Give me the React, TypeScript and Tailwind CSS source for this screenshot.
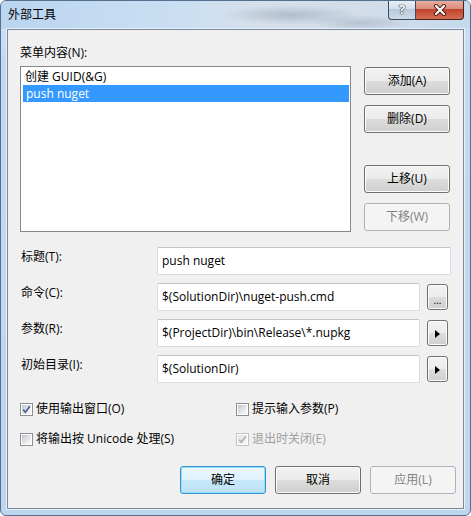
import React from "react"

const btnBase = "w-[86px] h-[28px] rounded-[3px] border text-[12px] flex items-center justify-center shrink-0"
const btnNormal = "border-[#707070] text-black bg-[linear-gradient(to_bottom,#f2f2f2_0%,#ebebeb_50%,#dddddd_50%,#cfcfcf_100%)] shadow-[inset_0_0_0_1px_#fcfcfc]"
const btnDisabled = "border-[#adb2b5] text-[#838383] bg-[#f4f4f4]"
const btnDefault = "border-[#3c8fd0] text-black bg-[linear-gradient(to_bottom,#eef8fd_0%,#def1fb_50%,#c8e8f9_50%,#bde2f6_100%)] shadow-[inset_0_0_0_1px_#8ee0fb]"

function Button({ label, kind = "normal", className = "" }: { label: string; kind?: "normal" | "disabled" | "default"; className?: string }) {
    const style = kind === "disabled" ? btnDisabled : kind === "default" ? btnDefault : btnNormal
    return <div className={`${btnBase} ${style} ${className}`}>{label}</div>
}

function CheckBox({ label, checked = false, disabled = false }: { label: string; checked?: boolean; disabled?: boolean }) {
    return (
        <div className="flex items-center h-[16px]">
            <span className={`w-[13px] h-[13px] border ${disabled ? "border-[#c4c4c4]" : "border-[#8e8f8f]"} bg-white p-[1px] flex shrink-0`}>
                <span className={`flex-1 flex items-center justify-center ${disabled ? "bg-[linear-gradient(135deg,#e3e3e3_0%,#f7f7f7_100%)]" : "bg-[linear-gradient(135deg,#c3c8cf_0%,#eceef0_70%,#f6f6f6_100%)]"}`}>
                    {checked && (
                        <svg width="9" height="9" viewBox="0 0 9 9">
                            <path d="M1.2 4.6 L3.4 7.2 L7.8 1.2" fill="none" stroke={disabled ? "#b0b0b0" : "#4a5f97"} strokeWidth="1.7" />
                        </svg>
                    )}
                </span>
            </span>
            <span className={`ml-[3px] text-[12px] leading-[16px] ${disabled ? "text-[#a0a0a0]" : "text-black"}`}>{label}</span>
        </div>
    )
}

function Field({ label, value, side }: { label: string; value: string; side?: "dots" | "arrow" }) {
    return (
        <div className="flex items-start h-[28px]">
            <div className="w-[137px] mt-[2px] pl-[1px] text-[12px] leading-[16px] text-black">{label}</div>
            <div className={`${side ? "w-[263px]" : "w-[294px]"} h-[28px] rounded-[2px] border border-[#dadbe0] border-t-[#c0c3ca] bg-white pl-[4px] flex items-center text-[12px] text-black whitespace-nowrap overflow-hidden`}>
                {value}
            </div>
            {side && (
                <div className="ml-[7px] mt-[1px] w-[21px] h-[26px] rounded-[3px] border border-[#707070] bg-[linear-gradient(to_bottom,#f2f2f2_0%,#ebebeb_50%,#dddddd_50%,#cfcfcf_100%)] shadow-[inset_0_0_0_1px_#fcfcfc] flex items-center justify-center">
                    {side === "dots" ? (
                        <span className="text-[10px] leading-none mt-[5px] text-black">...</span>
                    ) : (
                        <svg width="5" height="8" viewBox="0 0 5 8" className="mt-[1px]">
                            <path d="M0 0 L5 4 L0 8 Z" fill="#000" />
                        </svg>
                    )}
                </div>
            )}
        </div>
    )
}

export default function App() {
    return (
        <div className="w-[471px] h-[516px] flex flex-col overflow-hidden rounded-[6px] border border-[#54708f] bg-[linear-gradient(to_bottom,#d3e5f6_0%,#c2d9f0_60px,#bed6ee_100%)] font-['Open_Sans','Noto_Sans_CJK_SC',sans-serif]">
            {/* title bar */}
            <div className="h-[28px] flex items-start justify-between pl-[7px] pr-[6px] bg-[radial-gradient(ellipse_70px_10px_at_290px_14px,rgba(80,100,130,0.28),transparent),radial-gradient(ellipse_50px_8px_at_360px_22px,rgba(80,100,130,0.22),transparent),linear-gradient(90deg,#bad5f0_0%,#cbdff2_40%,#d6e0ea_55%,#d2dde9_78%,#c5d9ed_100%)]">
                <span className="mt-[6px] text-[12px] leading-[16px] text-black">外部工具</span>
                <div className="flex -mt-[1px]">
                    <div className="w-[28px] h-[20px] rounded-bl-[4px] border border-t-0 border-[#3b4c60] bg-[linear-gradient(to_bottom,#e9f0f7_0%,#d3deea_50%,#b9c9db_50%,#cddbe9_100%)] flex items-center justify-center">
                        <span className="text-[13px] font-bold leading-none text-white [text-shadow:0_0_1px_#1d2a3a,0_0_1px_#1d2a3a,0_0_1px_#1d2a3a]">?</span>
                    </div>
                    <div className="w-[48px] h-[20px] rounded-br-[4px] border border-t-0 border-l-0 border-[#4a2218] bg-[linear-gradient(to_bottom,#eab0a2_0%,#d98a78_50%,#c2432c_50%,#d46c55_100%)] flex items-center justify-center">
                        <svg width="14" height="12" viewBox="0 0 14 12">
                            <path d="M3 2 L11 10 M11 2 L3 10" stroke="#4a1c12" strokeWidth="4" strokeLinecap="round" />
                            <path d="M3 2 L11 10 M11 2 L3 10" stroke="#fff" strokeWidth="2.2" strokeLinecap="round" />
                        </svg>
                    </div>
                </div>
            </div>

            {/* client */}
            <div className="mx-[6px] h-[480px] border border-[#7a8899] shadow-[0_0_0_1px_#e8f1fa] bg-[#f0f0f0] flex flex-col pl-[12px] pt-[15px]">
                <div className="text-[12px] leading-[16px] text-black">菜单内容(N):</div>

                <div className="flex mt-[5px]">
                    <div className="w-[331px] h-[166px] border border-[#828790] bg-white p-[1px] text-[12px]">
                        <div className="h-[17px] leading-[17px] pl-[3px] text-black">创建 GUID(&amp;G)</div>
                        <div className="h-[17px] leading-[17px] pl-[3px] ml-[1px] bg-[#3399ff] text-white">push nuget</div>
                    </div>
                    <div className="flex flex-col ml-[13px] mt-[1px]">
                        <Button label="添加(A)" />
                        <Button label="删除(D)" className="mt-[10px]" />
                        <Button label="上移(U)" className="mt-[32px]" />
                        <Button label="下移(W)" kind="disabled" className="mt-[10px]" />
                    </div>
                </div>

                <div className="flex flex-col gap-[8px] mt-[15px]">
                    <Field label="标题(T):" value="push nuget" />
                    <Field label="命令(C):" value="$(SolutionDir)\nuget-push.cmd" side="dots" />
                    <Field label="参数(R):" value="$(ProjectDir)\bin\Release\*.nupkg" side="arrow" />
                    <Field label="初始目录(I):" value="$(SolutionDir)" side="arrow" />
                </div>

                <div className="grid grid-cols-[216px_1fr] gap-y-[14px] mt-[18px]">
                    <CheckBox label="使用输出窗口(O)" checked />
                    <CheckBox label="提示输入参数(P)" />
                    <CheckBox label="将输出按 Unicode 处理(S)" />
                    <CheckBox label="退出时关闭(E)" checked disabled />
                </div>

                <div className="flex justify-end gap-[9px] mt-[19px] pr-[7px]">
                    <Button label="确定" kind="default" className="h-[27px]" />
                    <Button label="取消" className="h-[27px]" />
                    <Button label="应用(L)" kind="disabled" className="h-[27px]" />
                </div>
            </div>
        </div>
    )
}
